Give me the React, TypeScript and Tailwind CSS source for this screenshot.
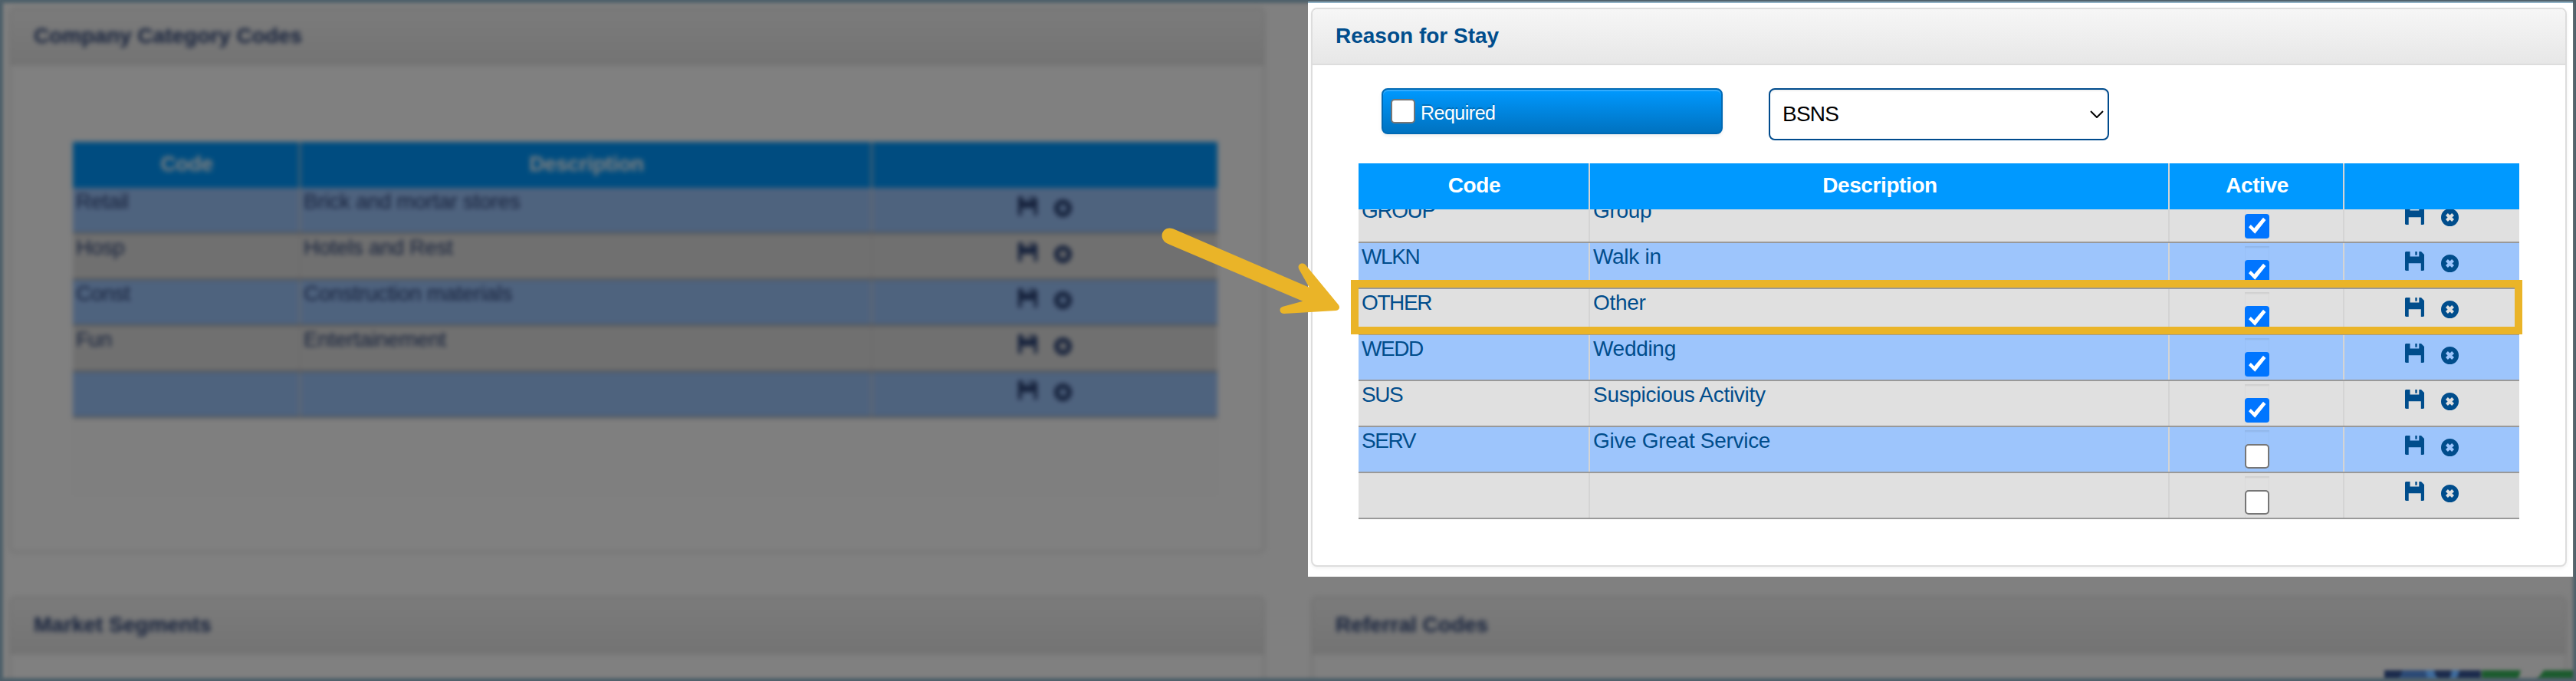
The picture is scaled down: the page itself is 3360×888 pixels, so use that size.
import type { ReactNode } from "react";
import clsx from "clsx";

interface CodeRow {
  code: string;
  description: string;
  active?: boolean;
}

const companyCategories: CodeRow[] = [
  { code: "Retail", description: "Brick and mortar stores" },
  { code: "Hosp", description: "Hotels and Rest" },
  { code: "Const", description: "Construction materials" },
  { code: "Fun", description: "Entertainement" },
  { code: "", description: "" },
];

const stayReasons: CodeRow[] = [
  { code: "GROUP", description: "Group", active: true },
  { code: "WLKN", description: "Walk in", active: true },
  { code: "OTHER", description: "Other", active: true },
  { code: "WEDD", description: "Wedding", active: true },
  { code: "SUS", description: "Suspicious Activity", active: true },
  { code: "SERV", description: "Give Great Service", active: false },
  { code: "", description: "", active: false },
];

const categoryColumns = "grid-cols-[297px_746px_450px]";
const reasonColumns = "grid-cols-[302px_756px_228px_228px]";

export default function App() {
  return (
    <div className="relative flex h-[888px] w-[3360px] overflow-hidden bg-[#808080] font-['Liberation_Sans',Arial,sans-serif] text-[28px] leading-8 text-[#004d8c]">
      <div className="w-[1706px] shrink-0 pt-2.5 pl-3 text-[#2b4378]">
        <Panel title="Company Category Codes" className="h-[711px] w-[1638px] blur-[3px] brightness-50">
          <div className="mt-[100px] ml-[81px] h-[461px] w-[1493px] bg-[#fdfdfd]">
            <HeaderRow columns={categoryColumns} labels={["Code", "Description", ""]} />
            {companyCategories.map((row, i) => (
              <TableRow key={i} row={row} columns={categoryColumns} blue={i % 2 === 0} />
            ))}
          </div>
        </Panel>
        <Panel title="Market Segments" className="mt-[57px] h-40 w-[1638px] blur-[3px] brightness-50" />
      </div>

      <div className="w-[1654px] shrink-0 pt-0.5">
        <section className="relative z-10 h-[750px] w-[1650px] border-t-2 border-[#8fb0c4] bg-white pt-1.5 pl-1">
          <Panel title="Reason for Stay" className="h-[729px] w-[1638px] shadow-[0_2px_4px_rgba(0,0,0,0.06)]">
            <div className="flex gap-[60px] pt-[30px] pl-[90px]">
              <RequiredToggle />
              <ReasonSelect />
            </div>
            <div className="relative mt-[30px] ml-[60px] w-[1514px]">
              <HeaderRow columns={reasonColumns} labels={["Code", "Description", "Active", ""]} />
              {/* list is scrolled to the end, so the first row is partly hidden */}
              <div className="flex h-[404px] flex-col justify-end overflow-hidden">
                {stayReasons.map((row, i) => (
                  <TableRow key={i} row={row} columns={reasonColumns} blue={i % 2 === 1} />
                ))}
              </div>
              <div className="absolute top-[152px] -left-2.5 h-[71px] w-[1528px] border-10 border-[#eab428]" />
            </div>
          </Panel>
        </section>
        <Panel
          title="Referral Codes"
          className="mt-[26px] ml-1 h-40 w-[1638px] text-[#2b4378] blur-[3px] brightness-50"
        />
      </div>

      <ChatBadge />
      <div className="absolute -inset-2 border-12 border-[#4d5f69] blur-[2px]" />
      <Arrow />
    </div>
  );
}

function Panel({
  title,
  className,
  children,
}: {
  title: string;
  className?: string;
  children?: ReactNode;
}) {
  return (
    <div className={clsx("rounded-lg border-2 border-[#dddddd] bg-white", className)}>
      <div className="h-[73px] rounded-t-md border-b-2 border-[#dddddd] bg-linear-to-b from-[#f6f6f6] to-[#e7e7e7] pt-[19px] pl-[30px] font-bold">
        {title}
      </div>
      {children}
    </div>
  );
}

function HeaderRow({ columns, labels }: { columns: string; labels: string[] }) {
  return (
    <div className={clsx("grid h-[60px] bg-[#0099ff] font-bold text-white", columns)}>
      {labels.map((label, i) => (
        <div
          key={i}
          className={clsx(
            "pt-[13px] pl-0.5 text-center tracking-[-0.4px]",
            i < labels.length - 1 && "border-r-2 border-[#d4d4d4]"
          )}
        >
          {label}
        </div>
      ))}
    </div>
  );
}

function TableRow({ row, columns, blue }: { row: CodeRow; columns: string; blue: boolean }) {
  return (
    <div
      className={clsx(
        "grid h-[60px] shrink-0 border-b-2 border-[#999999]",
        blue ? "bg-[#9dc5fc]" : "bg-[#e0e0e0]",
        columns
      )}
    >
      <div
        className={clsx(
          "border-r-2 border-[#d4d4d4] pt-0.5 pl-1",
          row.active === undefined ? "tracking-[-0.5px]" : "tracking-[-1.4px]"
        )}
      >
        {row.code}
      </div>
      <div className="border-r-2 border-[#d4d4d4] pt-0.5 pl-1 tracking-[-0.3px]">{row.description}</div>
      {row.active !== undefined && (
        <div className="flex justify-center border-r-2 border-[#d4d4d4] pt-1 pl-0.5">
          <div className="h-[54px] w-8 pt-[18px] shadow-[inset_0_2px_2px_rgba(0,0,0,0.075)]">
            <Checkbox checked={row.active} />
          </div>
        </div>
      )}
      <div className="flex justify-center gap-[22px] pt-[11px]">
        <SaveIcon />
        <DeleteIcon />
      </div>
    </div>
  );
}

function Checkbox({ checked }: { checked: boolean }) {
  if (!checked) {
    return <span className="block size-8 rounded-[5px] border-2 border-[#767676] bg-white" />;
  }
  return (
    <span className="block size-8 rounded-[4px] bg-[#0075ff]">
      <svg viewBox="0 0 32 32" className="size-8" fill="#fff">
        <path d="M5 17.2 7.8 14l4.5 4.4L24 4.8 27.4 8 13.3 25.7Z" />
      </svg>
    </span>
  );
}

function RequiredToggle() {
  return (
    <div className="flex h-[60px] w-[445px] rounded-lg border-2 border-[#0069b4] bg-linear-to-b from-[#0099ff] to-[#0072c0] pt-3 pl-2.5 text-[25px] text-white shadow-[inset_0_2px_0_rgba(255,255,255,0.2),0_2px_4px_rgba(0,0,0,0.08)] [text-shadow:0_-2px_0_rgba(0,0,0,0.2)]">
      <Checkbox checked={false} />
      <span className="pt-0.5 pl-[7px] tracking-[-0.5px]">Required</span>
    </div>
  );
}

function ReasonSelect() {
  return (
    <div className="flex h-[68px] w-[444px] items-center justify-between rounded-lg border-2 border-[#004b8d] bg-white pr-[5px] pl-4 text-black shadow-[inset_0_2px_2px_rgba(0,0,0,0.06)]">
      <span className="tracking-[-0.8px]">BSNS</span>
      <svg viewBox="0 0 18 10" className="h-2.5 w-[18px]" fill="none" stroke="currentColor" strokeWidth="2">
        <path d="M1 1l8 8 8-8" />
      </svg>
    </div>
  );
}

function SaveIcon() {
  return (
    <svg viewBox="0 0 25 25" className="size-[25px]" fill="currentColor">
      <path d="M1 0h5.5v6.5h11.8V0H21l4 4v20l-1 1h-3.2v-9.7H4.7V25H1l-1-1V1Z" />
      <path d="M13.3 0h2.4v4.7h-2.4Z" />
    </svg>
  );
}

function DeleteIcon() {
  return (
    <svg viewBox="-11.5 -11.5 23 23" className="mt-1 size-[23px]" fill="currentColor" fillRule="evenodd">
      <path d="M0-11.5a11.5 11.5 0 1 1 0 23a11.5 11.5 0 1 1 0-23ZM2.6-5.5 5.5-2.6 2.9 0 5.5 2.6 2.6 5.5 0 2.9-2.6 5.5-5.5 2.6-2.9 0-5.5-2.6-2.6-5.5 0-2.9Z" />
    </svg>
  );
}

// top edge of the chat widget that peeks in from below
function ChatBadge() {
  return (
    <svg viewBox="0 0 250 14" className="absolute right-0 bottom-0 h-3.5 w-[250px] blur-[2px]">
      <path fill="#1c2c4d" d="M0 0h126v14H0Z" />
      <path fill="#2c4a76" d="M24 0h42v14H18Z" />
      <path fill="#3f6b9c" d="M54 0h10l6 14H56ZM88 0h10l-4 14h-9Z" />
      <path fill="#1d5c2f" d="M127 0h51l-4 14h-47ZM208 0h42v14h-52Z" />
    </svg>
  );
}

function Arrow() {
  return (
    <svg viewBox="0 0 250 120" className="absolute top-[290px] left-[1510px] z-20 h-[120px] w-[250px]" fill="#eab428">
      <path d="M20 8.3 197.7 84.700 184.300 61c-3-6.500 4.500-10 8.700-5.500L235.500 107c3 3.700 1.500 7.500-3 8L165 119c-6.500.5-7.500-8-1.500-9.200L189.300 102.700 12.500 27.500C-.5 20.500 6.500 3.500 20 8.300Z" />
    </svg>
  );
}
